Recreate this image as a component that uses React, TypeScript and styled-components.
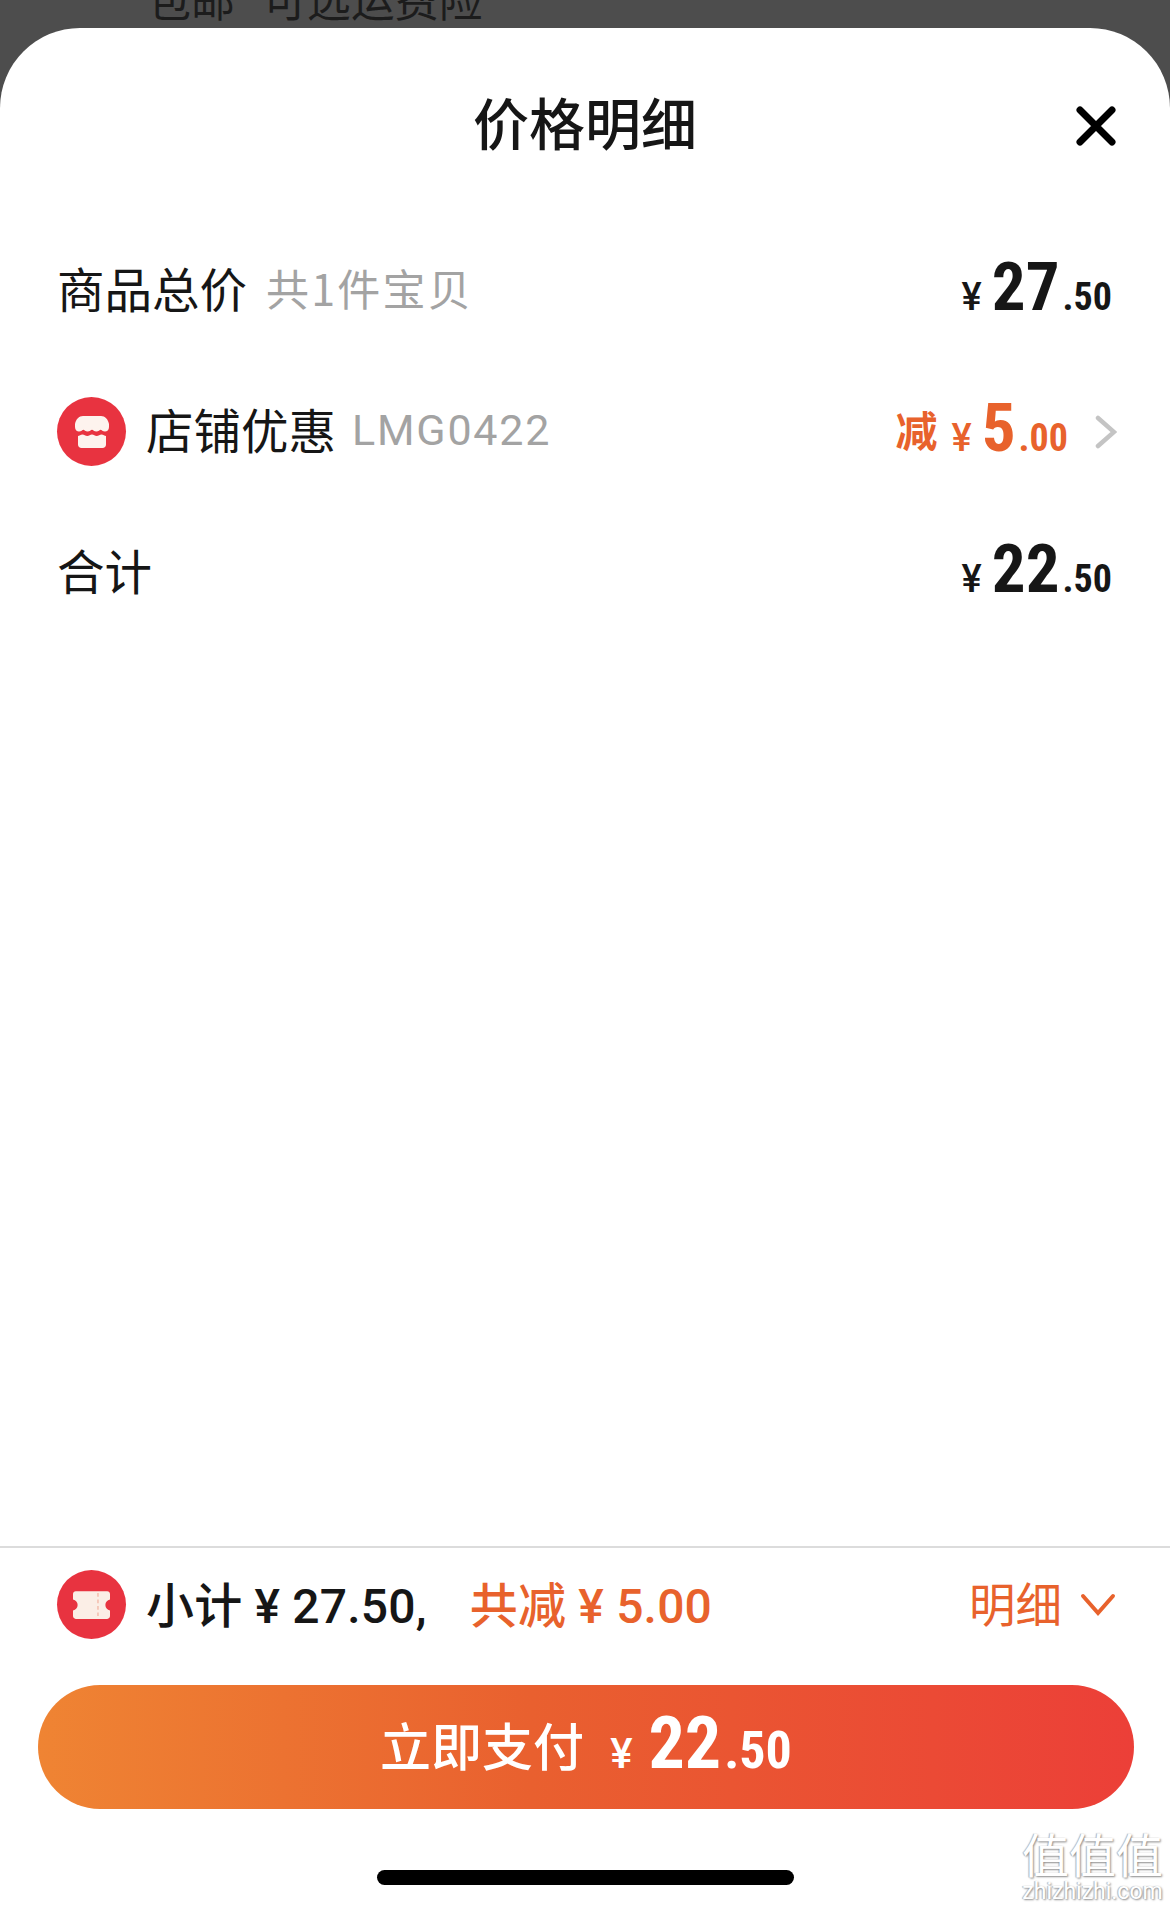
import styled, { createGlobalStyle } from 'styled-components';

const CJK = `"Noto Sans CJK SC", "Noto Sans", sans-serif`;
const NUM = `Roboto, "Noto Sans CJK SC", sans-serif`;
const ORANGE = '#e8622c';
const INK = '#161616';

const GlobalStyle = createGlobalStyle`
  html, body { margin: 0; padding: 0; background: #4d4d4d; }
  * { box-sizing: border-box; }
`;

function StoreIcon() {
  return (
    <svg width="34" height="32" viewBox="0 0 34 32">
      <path
        d="M8 0h18c4 0 7 3 8 8l0 3c0 3-2 4.500-4 4.500-2.200 0-3.500-1.800-4.300-1.800-1 0-2.200 1.800-4.300 1.800s-3.300-1.800-4.400-1.800-2.300 1.800-4.400 1.800-3.300-1.800-4.300-1.800c-.8 0-2.100 1.800-4.300 1.800-2 0-4-1.500-4-4.500V8C1 3 4 0 8 0z"
        fill="#fdf3ee"
      />
      <path
        d="M3 20c1.300 0 2.800-1.600 4.500-1.600 1.600 0 3 1.600 4.800 1.600s3-1.600 4.700-1.600 2.900 1.600 4.700 1.600 3.200-1.600 4.800-1.600c1.700 0 3.200 1.600 4.500 1.600v8.500c0 2-1.500 3.500-3.500 3.500h-21C4.500 32 3 30.500 3 28.500z"
        fill="#fdf3ee"
      />
    </svg>
  );
}

function TicketIcon() {
  return (
    <svg width="37" height="28" viewBox="0 0 40 30">
      <path
        d="M3 0h34c1.700 0 3 1.300 3 3v6c-3 .6-5 3-5 6s2 5.400 5 6v6c0 1.700-1.300 3-3 3H3c-1.700 0-3-1.300-3-3v-6c3-.6 5-3 5-6S3 9.600 0 9V3c0-1.700 1.300-3 3-3z"
        fill="#fbeee6"
      />
      <path d="M27 2v26" stroke="#f3b9a8" strokeWidth="1.500" strokeDasharray="4 3" />
    </svg>
  );
}

function CloseIcon() {
  return (
    <svg width="40" height="40" viewBox="0 0 40 40">
      <path d="M4 4l32 32M36 4L4 36" stroke="#000" strokeWidth="7" strokeLinecap="round" />
    </svg>
  );
}

function ChevronRight() {
  return (
    <svg width="22" height="34" viewBox="0 0 22 34">
      <path d="M3 3l16 14L3 31" fill="none" stroke="#c4c4c4" strokeWidth="4.500" strokeLinecap="round" />
    </svg>
  );
}

function ChevronDown() {
  return (
    <svg width="36" height="24" viewBox="0 0 36 24">
      <path d="M3 3l15 17L33 3" fill="none" stroke={ORANGE} strokeWidth="4" strokeLinecap="round" />
    </svg>
  );
}

function Amount({ whole, cents, color, className }: { whole: string; cents: string; color?: string; className?: string }) {
  return (
    <Price $color={color} className={className}>
      <Yen>¥</Yen>
      <Whole>{whole}</Whole>
      <Cents>.{cents}</Cents>
    </Price>
  );
}

export default function App() {
  return (
    <>
      <GlobalStyle />
      <Page>
        <BehindText>
          <BehindLabel>包邮 可选运费险</BehindLabel>
        </BehindText>
        <Sheet>
          <Header>
            <span />
            <Title>价格明细</Title>
            <CloseButton>
              <CloseIcon />
            </CloseButton>
          </Header>

          <Row>
            <RowLeft>
              <Label>商品总价</Label>
              <Hint>共1件宝贝</Hint>
            </RowLeft>
            <Amount whole="27" cents="50" />
          </Row>
          <Row>
            <RowLeft>
              <Badge>
                <StoreIcon />
              </Badge>
              <Label>店铺优惠</Label>
              <Code>LMG0422</Code>
            </RowLeft>
            <RowRight>
              <Minus>减</Minus>
              <Amount whole="5" cents="00" color={ORANGE} />
              <ChevronRight />
            </RowRight>
          </Row>
          <Row>
            <Label>合计</Label>
            <Amount whole="22" cents="50" />
          </Row>

          <Spacer />

          <Footer>
            <Summary>
              <Badge>
                <TicketIcon />
              </Badge>
              <SummaryText>小计 ¥ 27.50,</SummaryText>
              <SummaryText $accent>共减 ¥ 5.00</SummaryText>
              <DetailToggle>
                <DetailLabel>明细</DetailLabel>
                <ChevronDown />
              </DetailToggle>
            </Summary>
            <PayButton>
              <PayLabel>立即支付</PayLabel>
              <PayAmount whole="22" cents="50" color="#fff" />
            </PayButton>
            <HomeBar />
            <Watermark>
              <WatermarkMark>值值值</WatermarkMark>
              <WatermarkUrl>zhizhizhi.com</WatermarkUrl>
            </Watermark>
          </Footer>
        </Sheet>
      </Page>
    </>
  );
}

const Page = styled.div`
  width: 1170px;
  height: 1909px;
  overflow: hidden;
  display: flex;
  flex-direction: column;
  background: #4d4d4d;
`;

const BehindText = styled.div`
  height: 28px;
  flex: none;
  padding-left: 147px;
  overflow: hidden;
  display: flex;
  align-items: flex-end;
`;

const BehindLabel = styled.span`
  font: 400 44px/56px ${CJK};
  word-spacing: 18px;
  color: #1c1c1c;
  white-space: nowrap;
  margin-bottom: 2px;
`;

const Sheet = styled.div`
  flex: 1;
  position: relative;
  display: flex;
  flex-direction: column;
  background: #fff;
  border-radius: 80px 80px 0 0;
`;

const Header = styled.div`
  height: 192px;
  flex: none;
  display: grid;
  grid-template-columns: 1fr auto 1fr;
  align-items: center;
  padding: 0 54px;
`;

const Title = styled.h1`
  margin: 0;
  padding-bottom: 7px;
  font: 500 56px/1 ${CJK};
  color: ${INK};
`;

const CloseButton = styled.div`
  justify-self: end;
  display: flex;
  margin-top: 4px;
`;

const Row = styled.div`
  height: 141px;
  flex: none;
  display: flex;
  align-items: center;
  justify-content: space-between;
  padding: 0 58px 0 57px;
`;

const RowLeft = styled.div`
  display: flex;
  align-items: center;
`;

const RowRight = styled.div`
  display: flex;
  align-items: center;
  margin-right: -5px;
  svg { margin-left: 27px; }
`;

const Label = styled.span`
  padding-bottom: 6px;
  font: 400 47.500px/1 ${CJK};
  color: ${INK};
`;

const Hint = styled.span`
  margin-left: 19px;
  padding-bottom: 6px;
  font: 400 43px/1 ${CJK};
  letter-spacing: 2.200px;
  color: #a3a3a3;
`;

const Code = styled.span`
  margin-left: 16px;
  padding-bottom: 2px;
  font: 400 43px/1 Roboto, sans-serif;
  letter-spacing: 1.800px;
  color: #a3a3a3;
`;

const Badge = styled.div`
  width: 69px;
  height: 69px;
  flex: none;
  margin-right: 20px;
  border-radius: 50%;
  background: #e83340;
  display: flex;
  align-items: center;
  justify-content: center;
`;

const Minus = styled.span`
  margin-right: 14px;
  padding-bottom: 6px;
  font: 700 42px/1 ${CJK};
  color: ${ORANGE};
`;

const Price = styled.span<{ $color?: string }>`
  display: inline-flex;
  align-items: baseline;
  padding-bottom: 8px;
  font-family: ${NUM};
  font-weight: 700;
  font-stretch: 84%;
  color: ${(p) => p.$color ?? INK};
`;

const Yen = styled.span`
  margin-right: 10px;
  font-size: 38px;
  font-weight: 500;
  font-stretch: 100%;
`;

const Whole = styled.span`
  font-size: 67px;
`;

const Cents = styled.span`
  margin-left: 3px;
  font-size: 38px;
`;

const PayAmount = styled(Amount)`
  ${Whole} { font-size: 72px; }
  ${Cents} { font-size: 52px; }
  ${Yen} { font-size: 42px; margin-right: 16px; }
`;

const Spacer = styled.div`
  flex: 1;
`;

const Footer = styled.div`
  flex: none;
  position: relative;
  display: flex;
  flex-direction: column;
  border-top: 2px solid #dcdcdc;
`;

const Summary = styled.div`
  height: 113px;
  display: flex;
  align-items: center;
  padding: 0 58px 0 57px;
`;

const SummaryText = styled.span<{ $accent?: boolean }>`
  margin-right: ${(p) => (p.$accent ? '0' : '43px')};
  padding-top: 4px;
  font: 500 48px/1 ${NUM};
  letter-spacing: 0.200px;
  color: ${(p) => (p.$accent ? ORANGE : INK)};
`;

const DetailToggle = styled.div`
  margin-left: auto;
  margin-right: -4px;
  display: flex;
  align-items: center;
  gap: 18px;
`;

const DetailLabel = styled.span`
  padding-bottom: 4px;
  font: 400 46.500px/1 ${CJK};
  color: ${ORANGE};
`;

const PayButton = styled.div`
  height: 124px;
  margin: 24px 36px 0 38px;
  border-radius: 62px;
  background: linear-gradient(90deg, #ef8433 0%, #e9602f 45%, #ec3f38 100%);
  display: flex;
  align-items: center;
  justify-content: center;
  gap: 26px;
`;

const PayLabel = styled.span`
  padding-bottom: 6px;
  font: 500 51px/1 ${CJK};
  color: #fff;
`;

const HomeBar = styled.div`
  width: 417px;
  height: 15px;
  margin: 61px 0 24px 377px;
  border-radius: 8px;
  background: #000;
`;

const Watermark = styled.div`
  position: absolute;
  right: 7px;
  bottom: 5px;
  display: flex;
  flex-direction: column;
  align-items: center;
  color: #fff;
  text-shadow: 1px 1px 2px #8c8c8c, -1px 0 1px #b5b5b5;
`;

const WatermarkMark = styled.span`
  font: 400 47px/54px ${CJK};
`;

const WatermarkUrl = styled.span`
  font: 400 23px/24px Roboto, sans-serif;
`;
